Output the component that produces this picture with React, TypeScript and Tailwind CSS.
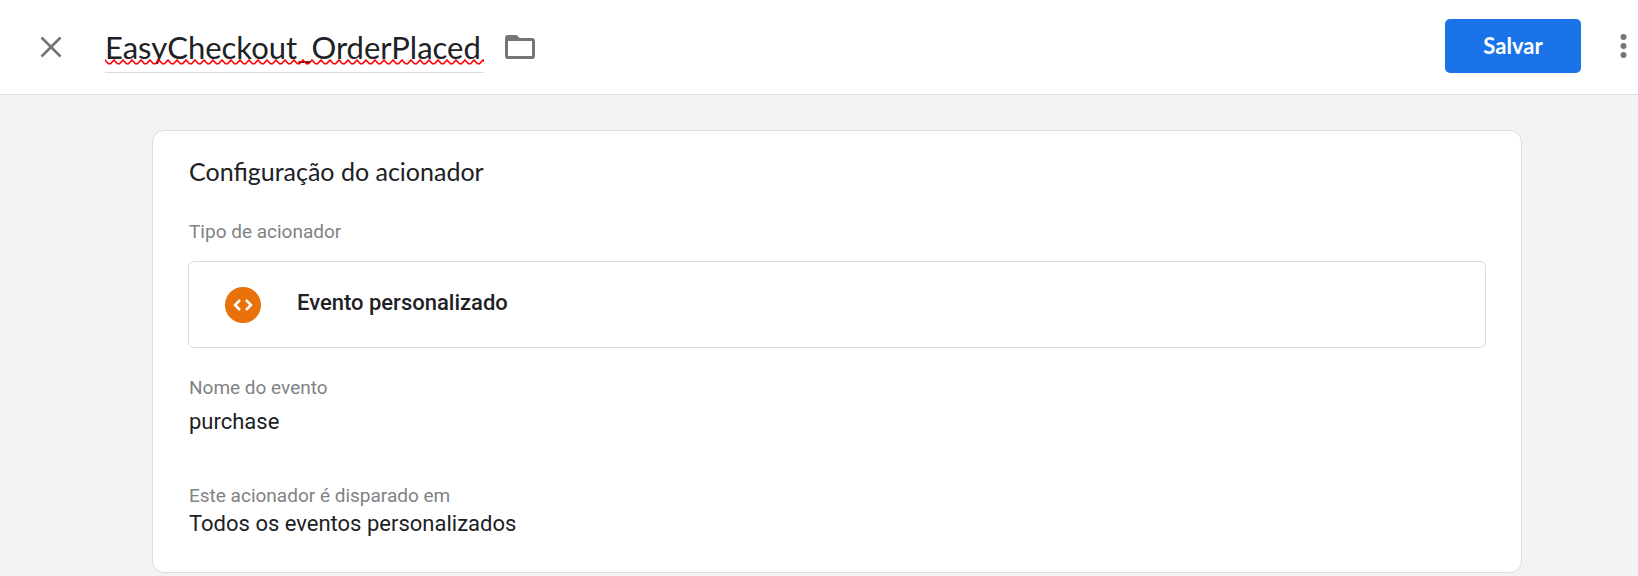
import React, { useState } from "react";

interface FieldProps {
  label: string;
  value: string;
  className?: string;
}

const Field: React.FC<FieldProps> = ({ label, value, className = "" }) => {
  return (
    <div className={`flex flex-col ${className}`}>
      <dt className="text-[19px] leading-6 text-[#808286]">{label}</dt>
      <dd className="text-[22px] leading-7 text-[#202124]">{value}</dd>
    </div>
  );
};

const App: React.FC = () => {
  const [name, setName] = useState("EasyCheckout_OrderPlaced");

  return (
    <div className="flex min-h-screen flex-col bg-[#f1f3f4] font-[Roboto,sans-serif] text-[#202124]">
      {/* Header */}
      <header className="flex h-[95px] items-center border-b border-[#dadce0] bg-white pr-[7px] pb-[2px] pl-10 font-[Lato,sans-serif]">
        <div className="flex items-center pt-[2px]">
          <button type="button" aria-label="Fechar" className="text-[#757575]">
            <svg width="22" height="22" viewBox="0 0 22 22" fill="none">
              <path
                d="M1.5 1.5L20.5 20.5M20.5 1.5L1.5 20.5"
                stroke="currentColor"
                strokeWidth="2.6"
              />
            </svg>
          </button>

          <div className="relative ml-[43px] w-[379px]">
            <input
              type="text"
              aria-label="Nome do acionador"
              value={name}
              spellCheck={false}
              onChange={(e) => setName(e.target.value)}
              className="block h-[52px] w-full border-b border-[#dadce0] text-[31px] outline-none"
            />
            {/* Spelling squiggle */}
            <svg
              className="pointer-events-none absolute bottom-2 left-0 h-[6px] w-full"
              aria-hidden="true"
            >
              <defs>
                <pattern
                  id="squiggle"
                  width="9"
                  height="6"
                  patternUnits="userSpaceOnUse"
                >
                  <path
                    d="M-1 0L0 1L3.5 4.8H5.5L9 1L10 0"
                    fill="none"
                    stroke="#ff0000"
                    strokeWidth="1.6"
                  />
                </pattern>
              </defs>
              <rect width="100%" height="6" fill="url(#squiggle)" />
            </svg>
          </div>

          <button
            type="button"
            aria-label="Pasta"
            className="ml-[21px] text-[#757575]"
          >
            <svg width="30" height="24" viewBox="0 0 30 24" fill="currentColor">
              <path
                fillRule="evenodd"
                d="M3 0H11.5L14.5 3H27A3 3 0 0 1 30 6V21A3 3 0 0 1 27 24H3A3 3 0 0 1 0 21V3A3 3 0 0 1 3 0ZM3 6V21H27V6Z"
              />
            </svg>
          </button>
        </div>

        <button
          type="button"
          className="ml-auto h-[54px] w-[136px] rounded-[5px] bg-[#1a73e8] pb-[2px] text-[22px] font-bold text-white"
        >
          Salvar
        </button>
        <button
          type="button"
          aria-label="Mais ações"
          className="ml-[35px] text-[#757575]"
        >
          <svg width="15" height="24" viewBox="0 0 15 24" fill="currentColor">
            <circle cx="7.5" cy="3" r="3" />
            <circle cx="7.5" cy="12" r="3" />
            <circle cx="7.5" cy="21" r="3" />
          </svg>
        </button>
      </header>

      {/* Trigger card */}
      <main className="pt-[35px] pr-[116px] pb-[3px] pl-[152px]">
        <section className="rounded-xl border border-[#dadce0] bg-white px-[35px] pt-6 pb-[34px]">
          <h2 className="px-px font-[Lato,sans-serif] text-[25px] leading-8">
            Configuração do acionador
          </h2>

          <h3 className="mt-[33px] px-px text-[19px] leading-6 text-[#808286]">
            Tipo de acionador
          </h3>
          <button
            type="button"
            className="mt-[17px] flex h-[87px] w-full items-center rounded-md border border-[#dadce0] px-9 text-left"
          >
            <span className="flex size-9 items-center justify-center rounded-full bg-[#e8710a] text-white">
              <svg width="20" height="12" viewBox="0 0 20 12" fill="none">
                <path
                  d="M7 1L2 6L7 11M13 1L18 6L13 11"
                  stroke="currentColor"
                  strokeWidth="2.5"
                />
              </svg>
            </span>
            <span className="ml-9 pb-1 text-[22px] leading-7 font-medium">
              Evento personalizado
            </span>
          </button>

          <dl className="mt-7 px-px">
            <Field label="Nome do evento" value="purchase" className="gap-2" />
            <Field
              label="Este acionador é disparado em"
              value="Todos os eventos personalizados"
              className="mt-12 gap-[2px]"
            />
          </dl>
        </section>
      </main>
    </div>
  );
};

export default App;
